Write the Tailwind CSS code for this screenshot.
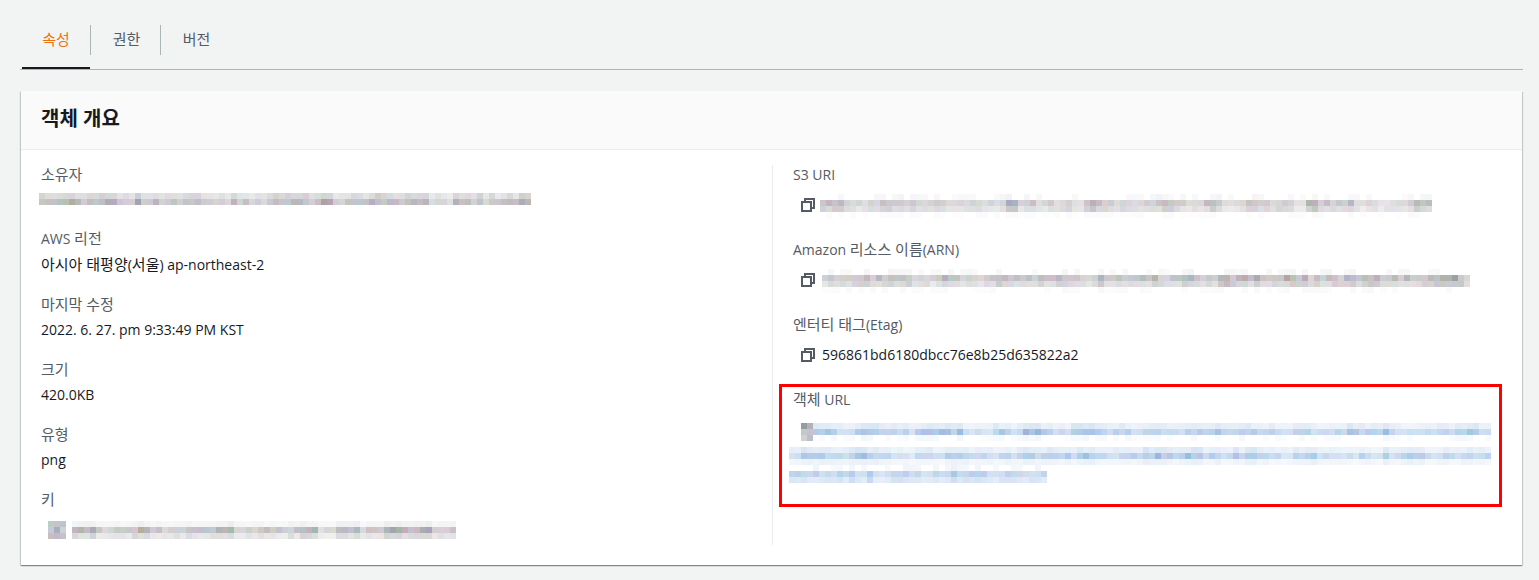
<!DOCTYPE html>
<html lang="ko">
<head>
<meta charset="utf-8">
<script src="https://cdn.jsdelivr.net/npm/@tailwindcss/browser@4"></script>
<title>객체 개요</title>
</head>
<body class="relative h-[580px] w-[1539px] overflow-hidden bg-[#f2f3f3] font-['Open_Sans','Noto_Sans_CJK_KR',sans-serif] text-[14px] leading-[20px] text-[#16191f]">
  <!-- tabs -->
  <div class="ml-5 flex h-[70px] w-[1503px] items-start border-b border-[#aab7b8] pl-[2px]">
    <div class="h-[69px] w-[68px] border-b-2 border-[#16191f] pt-[29px] text-center text-[15px] text-[#ec7211]">속성</div>
    <div class="mt-[25px] flex h-[30px] w-[70px] items-center justify-center border-l border-[#aab7b8] pb-[2px] pl-[2px] text-[15px] text-[#545b64]">권한</div>
    <div class="mt-[25px] flex h-[30px] w-[70px] items-center justify-center border-l border-[#aab7b8] pb-[2px] pl-[2px] text-[15px] text-[#545b64]">버전</div>
  </div>
  <!-- card -->
  <div class="ml-[21px] mt-[21px] h-[474px] w-[1501px] bg-white shadow-[0_1px_1px_0_rgba(0,28,36,0.3),1px_1px_1px_0_rgba(0,28,36,0.15),-1px_1px_1px_0_rgba(0,28,36,0.15)]">
    <div class="flex h-[59px] items-center border-b border-[#eaeded] bg-[#fafafa] px-5 pb-[3px]">
      <h2 class="text-[20px] font-bold leading-[22px] text-[#16191f]">객체 개요</h2>
    </div>
    <div class="flex py-[15px]">
      <!-- left column -->
      <div class="-mt-px w-[751px] pl-5">
        <div class="h-[65px]"><div class="text-[15px] text-[#545b64]">소유자</div><svg class="-ml-[2px] mt-[9px]" data-w="492" data-rows="0.3,0.52" data-seed="11"></svg></div>
        <div class="flow-root h-[65px]"><div class="-mt-px text-[#545b64]">AWS <span class="text-[15px]">리전</span></div><div class="mt-[5px]"><span class="text-[15px]">아시아 태평양</span>(<span class="text-[15px]">서울</span>) ap-northeast-2</div></div>
        <div class="h-[65px]"><div class="text-[15px] text-[#545b64]">마지막 수정</div><div class="mt-[6px]">2022. 6. 27. pm 9:33:49 PM KST</div></div>
        <div class="h-[65px]"><div class="text-[15px] text-[#545b64]">크기</div><div class="mt-[6px]">420.0KB</div></div>
        <div class="h-[65px]"><div class="text-[15px] text-[#545b64]">유형</div><div class="mt-[6px]">png</div></div>
        <div class="h-[65px]"><div class="text-[15px] text-[#545b64]">키</div>
          <div class="ml-[7px] mt-[12px] flex gap-[6px]">
            <svg data-w="18" data-rows="0.7,0.75,0.65" data-seed="5"></svg>
            <svg data-w="384" data-rows="0.1,0.52,0.26" data-seed="23"></svg>
          </div>
        </div>
      </div>
      <!-- right column -->
      <div class="h-[380px] flex-1 border-l border-[#eaeded] pl-5">
        <div class="h-[75px]"><div class="text-[#545b64]">S3 URI</div>
          <div class="ml-2 mt-[9px] flex gap-[5px]">
            <svg class="mt-1 shrink-0" width="14" height="14" viewBox="0 0 14 14" fill="none" stroke="#545b64" stroke-width="2"><path d="M4 4V1h9v9h-3"/><path d="M1 4h9v9H1z"/></svg>
            <svg data-w="612" data-rows="0.07,0.42,0.3,0.03" data-seed="37"></svg>
          </div>
        </div>
        <div class="flow-root h-[75px]"><div class="-mt-px text-[#545b64]">Amazon <span class="text-[15px]">리소스 이름</span>(ARN)</div>
          <div class="ml-2 mt-[9px] flex gap-[7px]">
            <svg class="mt-1 shrink-0" width="14" height="14" viewBox="0 0 14 14" fill="none" stroke="#545b64" stroke-width="2"><path d="M4 4V1h9v9h-3"/><path d="M1 4h9v9H1z"/></svg>
            <svg data-w="648" data-rows="0.07,0.5,0.34,0.04" data-seed="41"></svg>
          </div>
        </div>
        <div class="flow-root h-[75px]"><div class="-mt-px text-[#545b64]"><span class="text-[15px]">엔터티 태그</span>(Etag)</div>
          <div class="ml-2 mt-[9px] flex items-center gap-[7px] leading-[22px]">
            <svg class="shrink-0" width="14" height="14" viewBox="0 0 14 14" fill="none" stroke="#545b64" stroke-width="2"><path d="M4 4V1h9v9h-3"/><path d="M1 4h9v9H1z"/></svg>
            <span>596861bd6180dbcc76e8b25d635822a2</span>
          </div>
        </div>
        <div class="flow-root"><div class="-mt-px text-[#545b64]"><span class="text-[15px]">객체</span> URL</div>
          <div class="ml-2 mt-[13px] flex">
            <svg data-w="12" data-rows="0.85,0.65,0.6" data-seed="7"></svg>
            <svg data-w="678" data-rows="0.16,0.42,0.05" data-seed="53" data-blue="1"></svg>
          </div>
          <svg class="-ml-[4px] mt-[6px]" data-w="702" data-rows="0.16,0.4,0.1" data-seed="59" data-blue="1"></svg>
          <svg class="-ml-[4px]" data-w="258" data-rows="0.07,0.36,0.22" data-seed="61" data-blue="1"></svg>
        </div>
      </div>
    </div>
  </div>
  <!-- red annotation -->
  <div class="absolute left-[779px] top-[384px] h-[123px] w-[723px] border-[3px] border-[#ff0000]"></div>
  <script>
    document.querySelectorAll('svg[data-w]').forEach(function (el) {
      var w = +el.dataset.w, rows = el.dataset.rows.split(',').map(Number), s = +el.dataset.seed * 7919;
      var blue = el.dataset.blue;
      function rnd() { s = (s * 1664525 + 1013904223) >>> 0; s ^= s >>> 13; return (s >>> 0) / 4294967296; }
      el.setAttribute('width', w);
      el.setAttribute('height', rows.length * 6);
      el.setAttribute('shape-rendering', 'crispEdges');
      el.style.display = 'block';
      el.style.flex = 'none';
      var cols = Math.ceil(w / 6), amp = [], run = 0, cur = 1;
      for (var i = 0; i < cols; i++) {
        if (run-- <= 0) { run = Math.floor(rnd() * 4); cur = 0.65 + rnd() * 0.6; }
        amp.push(cur * (0.85 + rnd() * 0.3));
      }
      var html = '';
      rows.forEach(function (lvl, r) {
        for (var c = 0; c < cols; c++) {
          var a = Math.min(1, lvl * amp[c] * (0.8 + rnd() * 0.4));
          if (lvl < 0.1 && rnd() < 0.5) continue;
          var base = blue
            ? [60 + rnd() * 50, 125 + rnd() * 30, 190 + rnd() * 30]
            : [115 + rnd() * 45, 115 + rnd() * 40, 118 + rnd() * 45];
          html += '<rect x="' + c * 6 + '" y="' + r * 6 + '" width="' + Math.min(6, w - c * 6) + '" height="6" fill="rgb(' + base.map(Math.round).join(',') + ')" fill-opacity="' + a.toFixed(2) + '"/>';
        }
      });
      el.innerHTML = html;
    });
  </script>
</body>
</html>
